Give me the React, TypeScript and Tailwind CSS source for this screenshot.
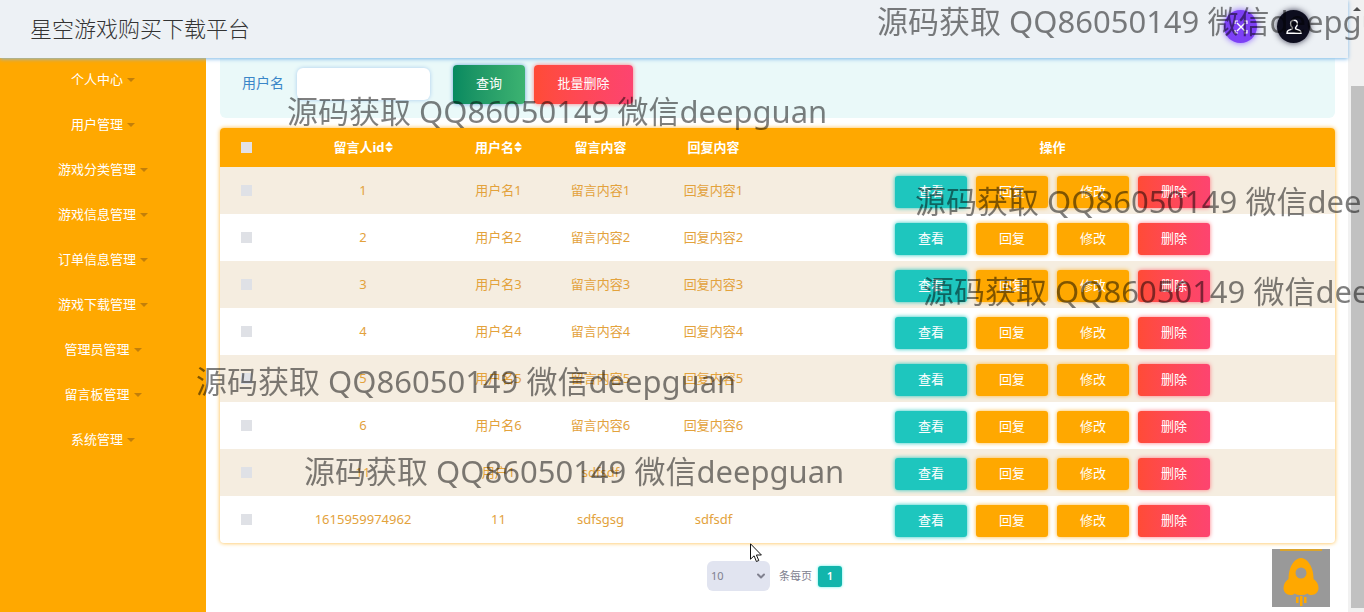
import { ChevronDown } from "lucide-react";

const menu = [
  "个人中心",
  "用户管理",
  "游戏分类管理",
  "游戏信息管理",
  "订单信息管理",
  "游戏下载管理",
  "管理员管理",
  "留言板管理",
  "系统管理",
];

const rows = [
  ["1", "用户名1", "留言内容1", "回复内容1"],
  ["2", "用户名2", "留言内容2", "回复内容2"],
  ["3", "用户名3", "留言内容3", "回复内容3"],
  ["4", "用户名4", "留言内容4", "回复内容4"],
  ["5", "用户名5", "留言内容5", "回复内容5"],
  ["6", "用户名6", "留言内容6", "回复内容6"],
  ["11", "用户1", "sdfsdf", ""],
  ["1615959974962", "11", "sdfsgsg", "sdfsdf"],
];

const actions = [
  { label: "查看", style: "bg-[#1ec6be] shadow-[0_0_4px_#1ec6be]" },
  { label: "回复", style: "bg-[#ffa800] shadow-[0_0_4px_#ffb93a]" },
  { label: "修改", style: "bg-[#ffa800] shadow-[0_0_4px_#ffb93a]" },
  { label: "删除", style: "bg-linear-to-r from-[#ff4b36] to-[#fd4470] shadow-[0_0_4px_#ff7a80]" },
];

const watermarks = [
  "left-[877px] top-0",
  "left-[287px] top-[90px]",
  "left-[915px] top-[180px]",
  "left-[923px] top-[270px]",
  "left-[196px] top-[360px]",
  "left-[304px] top-[450px]",
];

function SortIcon() {
  return (
    <svg viewBox="0 0 8 12" className="h-3 w-2" fill="currentColor" aria-hidden="true">
      <path d="M4 0.5L8 5.3H0zM4 11.5L0 6.7h8z" />
    </svg>
  );
}

function Check({ label, head = false }: { label: string; head?: boolean }) {
  return (
    <input
      type="checkbox"
      aria-label={label}
      className={`block mx-auto size-[11px] appearance-none ${head ? "bg-[#e3e1e6]" : "bg-[#dfe1e6]"}`}
    />
  );
}

function Header() {
  return (
    <header className="relative z-10 flex h-[58px] shrink-0 items-center justify-between bg-[#edf1f5] pl-[30px] pr-[38px] shadow-[0_1px_4px_#7db9e8]">
      <h1 className="pb-0.5 text-[22px] leading-8 font-light text-[#333]">星空游戏购买下载平台</h1>
      <div className="flex gap-5 pb-[5px]">
        <button
          aria-label="全屏"
          className="flex size-[33px] items-center justify-center rounded-full bg-[#7d40f5] text-white shadow-[0_0_6px_#8a5cff]"
        >
          <svg viewBox="0 0 16 16" className="size-4" fill="none" stroke="currentColor" strokeWidth="1.4" aria-hidden="true">
            <path d="M4 4l8 8M12 4l-8 8" />
            <path d="M2 5V2h3M11 2h3v3M14 11v3h-3M5 14H2v-3" strokeWidth="1.2" />
          </svg>
        </button>
        <button
          aria-label="用户"
          className="flex size-[33px] items-center justify-center rounded-full bg-[#0d0d1e] text-white shadow-[0_0_6px_#33334a]"
        >
          <svg viewBox="0 0 16 16" className="size-4" fill="none" stroke="currentColor" strokeWidth="1.4" aria-hidden="true">
            <path d="M8 1.2c-2.2 0-3.4 1.6-3.4 3.6 0 1.5.7 2.9 1.8 3.8v1.2L2.4 11.4C1.4 11.9 1 12.7 1 14.3h14c0-1.6-.4-2.4-1.4-2.9L9.6 9.8V8.6c1.1-.9 1.8-2.3 1.8-3.8 0-2-1.2-3.6-3.4-3.6z" />
          </svg>
        </button>
      </div>
    </header>
  );
}

function Sidebar() {
  return (
    <nav className="w-[206px] shrink-0 bg-[#ffa800]">
      <ul>
        {menu.map((item) => (
          <li key={item}>
            <a href="#" className="flex h-[45px] items-center justify-center gap-1 pb-0.5 text-[13px] text-white">
              {item}
              <svg viewBox="0 0 8 4" className="h-1 w-2" fill="#c27f0a" aria-hidden="true">
                <path d="M0 0h8L4 4z" />
              </svg>
            </a>
          </li>
        ))}
      </ul>
    </nav>
  );
}

function Filters() {
  return (
    <form className="flex h-[60px] items-start rounded-b-md bg-[#eaf9f9] pl-[22px] pt-[7px]">
      <label htmlFor="username" className="mt-2 text-sm leading-5 text-[#3a86c8]">
        用户名
      </label>
      <input
        id="username"
        className="ml-[13px] mt-[3px] h-8 w-[133px] rounded-md bg-white px-2 text-[13px] shadow-[0_0_4px_#a9cdee] outline-none"
      />
      <button
        type="button"
        className="ml-[23px] h-[39px] w-[72px] rounded-sm bg-linear-to-r from-[#068a60] to-[#3cb371] pb-0.5 text-[13px] text-white shadow-[0_0_4px_#6aa5d8]"
      >
        查询
      </button>
      <button
        type="button"
        className="ml-[9px] h-[39px] w-[99px] rounded-sm bg-linear-to-r from-[#ff4b36] to-[#fd4470] pb-0.5 text-[13px] text-white shadow-[0_0_4px_#ff7a80]"
      >
        批量删除
      </button>
    </form>
  );
}

function MessageTable() {
  return (
    <div className="mt-[10px] overflow-clip rounded-sm bg-white shadow-[0_0_4px_#ffb93a]">
      <table className="w-full table-fixed text-center text-[13px] leading-5">
        <colgroup>
          <col className="w-[53px]" />
          <col className="w-[180px]" />
          <col className="w-[91px]" />
          <col className="w-[113px]" />
          <col className="w-[113px]" />
          <col />
        </colgroup>
        <thead className="bg-[#ffa800] text-white">
          <tr className="h-[39px]">
            <th>
              <Check label="全选" head />
            </th>
            <th className="pb-0.5">
              <span className="flex items-center justify-center">
                留言人id
                <SortIcon />
              </span>
            </th>
            <th className="pb-0.5">
              <span className="flex items-center justify-center">
                用户名
                <SortIcon />
              </span>
            </th>
            <th className="pb-0.5">留言内容</th>
            <th className="pb-0.5">回复内容</th>
            <th className="pb-0.5">操作</th>
          </tr>
        </thead>
        <tbody className="text-[#e3a23c]">
          {rows.map((row) => (
            <tr key={row[0]} className="h-[47px] odd:bg-[#f5ede0]">
              <td>
                <Check label={`选择 ${row[0]}`} />
              </td>
              {row.map((cell, i) => (
                <td key={i} className="pb-0.5">
                  {cell}
                </td>
              ))}
              <td>
                <div className="flex justify-center gap-[9px] pt-[2px]">
                  {actions.map((a) => (
                    <button key={a.label} className={`h-8 w-[72px] rounded-[3px] pb-0.5 text-white ${a.style}`}>
                      {a.label}
                    </button>
                  ))}
                </div>
              </td>
            </tr>
          ))}
        </tbody>
      </table>
    </div>
  );
}

function Pagination() {
  return (
    <div className="mt-[18px] flex items-center justify-center pr-[6px] text-[#80818f]">
      <div className="relative">
        <select
          aria-label="每页条数"
          className="block h-[30px] w-[63px] appearance-none rounded-md bg-[#e1e4f0] pl-1 text-[11px]"
        >
          <option>10</option>
        </select>
        <ChevronDown className="pointer-events-none absolute right-[3px] top-[9px] size-3" strokeWidth={4} />
      </div>
      <span className="ml-[9px] text-[11px]">条每页</span>
      <button className="ml-[6px] h-[21px] w-6 rounded-[3px] bg-[#12b5ac] pb-0.5 text-[11px] font-semibold leading-5 text-white shadow-[0_0_3px_#5ff0e8]">
        1
      </button>
    </div>
  );
}

function ScrollBar() {
  return (
    <div className="flex w-4 shrink-0 flex-col items-center bg-[#f1f1f1] pb-1 pl-0.5" aria-hidden="true">
      <svg viewBox="0 0 8 4" className="mb-[75px] mt-[7px] h-1 w-2 shrink-0" fill="#505050">
        <path d="M4 0l4 4H0z" />
      </svg>
      <div className="w-[13px] flex-1 bg-[#c1c1c1]" />
    </div>
  );
}

function BackToTop() {
  return (
    <button aria-label="返回顶部" className="fixed bottom-[5px] right-[34px] size-[58px] bg-[#999]">
      <svg viewBox="0 0 58 58" className="size-full" fill="#ffa800" aria-hidden="true">
        <path d="M8 0h42v2H8z" fill="#dba42c" />
        <path
          fillRule="evenodd"
          d="M29 9c-5 0-9 5-11 11-1 3-1.500 6-1.500 10-3 2-5 5-5 9 0 4 3 7 7 7 2 0 3-.5 4-1.500 2 1.500 4 1.500 6.500 1.500s4.500 0 6.500-1.500c1 1 2 1.500 4 1.500 4 0 7-3 7-7 0-4-2-7-5-9 0-4-.5-7-1.500-10-2-6-6-11-11-11zM29 18.500a5.500 5.500 0 1 1 0 11 5.500 5.500 0 0 1 0-11z"
        />
        <path d="M24 48h2.500v6H24zM28 47h2.500v10H28zM32 48h2.500v6H32z" />
      </svg>
    </button>
  );
}

function Overlay() {
  return (
    <div className="pointer-events-none fixed inset-0 z-20 overflow-hidden">
      {watermarks.map((place) => (
        <p key={place} className={`absolute whitespace-nowrap text-[31px] leading-[42px] text-black/50 ${place}`}>
          源码获取 QQ86050149 微信deepguan
        </p>
      ))}
      <svg viewBox="0 0 12 20" className="absolute left-[750px] top-[543px] h-5 w-3" fill="#fff" stroke="#111" aria-hidden="true">
        <path d="M0.5 0.8v15.4l3.6-3.4 2.3 5.7 2.4-1-2.4-5.5h5z" />
      </svg>
    </div>
  );
}

export default function App() {
  return (
    <div className="flex h-screen overflow-hidden bg-white font-['Noto_Sans','Noto_Sans_CJK_SC',sans-serif]">
      <div className="flex min-w-0 flex-1 flex-col">
        <Header />
        <div className="flex flex-1">
          <Sidebar />
          <main className="min-w-0 flex-1 pl-[14px] pr-[13px]">
            <Filters />
            <MessageTable />
            <Pagination />
          </main>
        </div>
      </div>
      <ScrollBar />
      <BackToTop />
      <Overlay />
    </div>
  );
}
